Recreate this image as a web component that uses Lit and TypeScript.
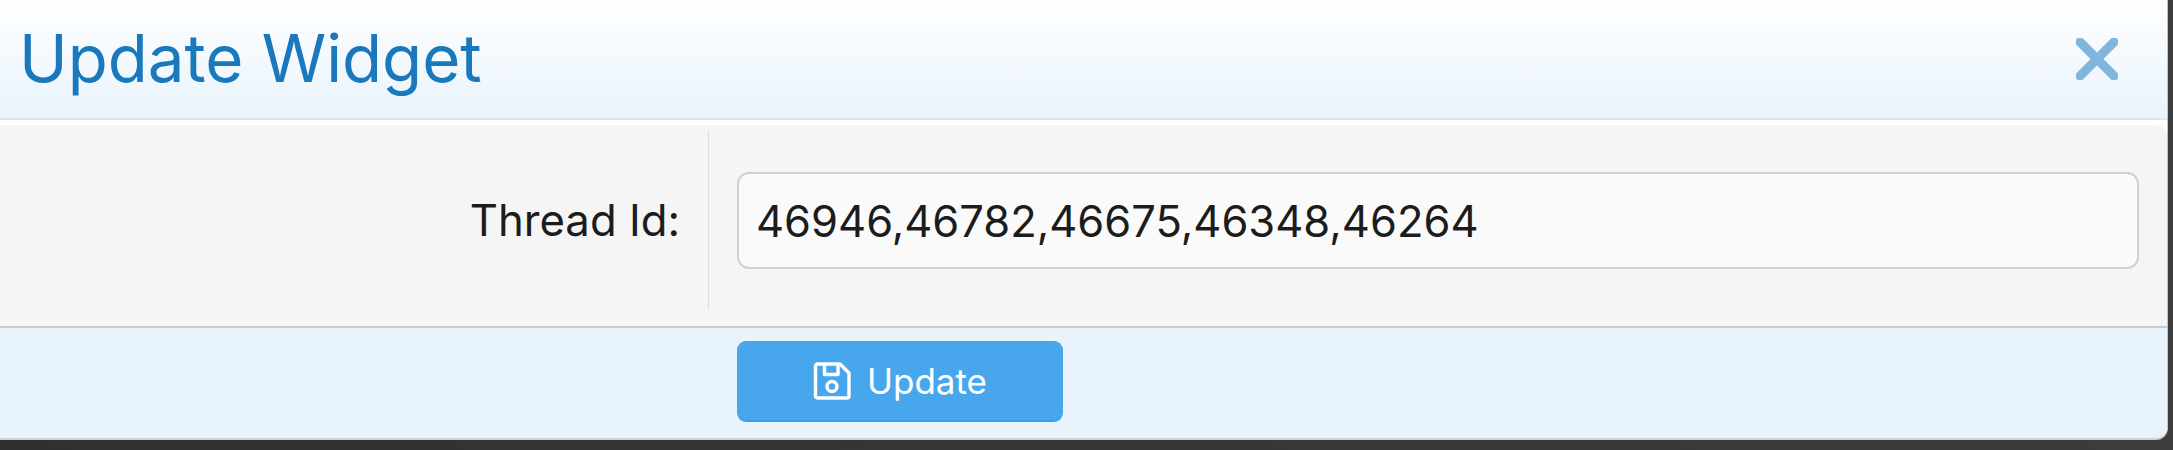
import { LitElement, css, html } from 'lit';
import { customElement, property } from 'lit/decorators.js';

@customElement("app-root")
export class AppRoot extends LitElement {

    @property({ type: String })
    public threadIds: string = "46946,46782,46675,46348,46264";

    static styles = css`

    :host {
        display: block;
        width: 2173px;
        height: 450px;
        overflow: hidden;
        background: linear-gradient( 90deg, #2f3030, #3c3c3c );
        font-family: Inter, "Liberation Sans", sans-serif;
    }

    .modal {
        width: 2168px;
        height: 440px;
        box-sizing: border-box;
        display: flex;
        flex-direction: column;
        background: #fff;
        border-right: 1px solid #c4c4c4;
        border-bottom: 2px solid #cfcfcf;
        border-bottom-right-radius: 12px;
        overflow: hidden;
    }

    .header {
        height: 120px;
        flex: none;
        box-sizing: border-box;
        display: flex;
        align-items: center;
        justify-content: space-between;
        padding: 0 49px 0 19px;
        background: linear-gradient( 180deg, #ffffff, #e8f3fc );
        border-bottom: 2px solid #e1e4e7;
    }

    .title {
        margin: 0;
        font-size: 65.4px;
        font-weight: 400;
        color: #1a78bc;
        line-height: 1;
    }

    .close {
        display: block;
        width: 42px;
        height: 42px;
    }

    .body {
        margin-top: 5px;
        height: 203px;
        flex: none;
        box-sizing: border-box;
        padding: 6px 28px 16px 0;
        display: grid;
        grid-template-columns: 709px 1fr;
        background: #f5f5f5;
        border-bottom: 2px solid #cccccc;
        border-top-right-radius: 10px;
    }

    .label {
        display: flex;
        align-items: center;
        justify-content: flex-end;
        padding-right: 28px;
        border-right: 1px solid #dedede;
        font-size: 43.7px;
        color: #1c1c1c;
    }

    .field {
        display: flex;
        align-items: center;
        padding-left: 28px;
    }

    .input {
        width: 100%;
        height: 97px;
        box-sizing: border-box;
        padding: 0 17px;
        background: #fafafa;
        border: 2px solid #d0d0d0;
        border-radius: 12px;
        font: inherit;
        font-size: 43.5px;
        color: #1c1c1c;
        outline: none;
    }

    .footer {
        flex: 1;
        padding: 13px 0 0 737px;
        background: #e8f3fc;
    }

    .button {
        width: 326px;
        height: 81px;
        box-sizing: border-box;
        display: flex;
        align-items: center;
        justify-content: center;
        gap: 16px;
        padding: 0;
        background: #48a7ec;
        border: 1px solid #48a7ec;
        border-bottom: 2px solid #3a9eea;
        border-radius: 9px;
        font: inherit;
        font-size: 35px;
        color: #fff;
    }

    .button svg {
        display: block;
        width: 38px;
        height: 38px;
    }

    `;

    render() {

        return html`
            <div class="modal">
                <div class="header">
                    <h1 class="title">Update Widget</h1>
                    <svg class="close" viewBox="0 0 42 42">
                        <path d="M4 4 L38 38 M38 4 L4 38" fill="none" stroke="#80b5dc" stroke-width="9" stroke-linecap="round"/>
                    </svg>
                </div>
                <div class="body">
                    <div class="label">Thread Id:</div>
                    <div class="field">
                        <input class="input" type="text" .value=${this.threadIds}>
                    </div>
                </div>
                <div class="footer">
                    <button class="button">
                        <svg viewBox="0 0 38 38" fill="none" stroke="#fff" stroke-width="3.4" stroke-linejoin="round">
                            <path d="M2.5 4 a2 2 0 0 1 2-2 H27 L36 11 V34 a2 2 0 0 1 -2 2 H4.5 a2 2 0 0 1 -2-2 Z"/>
                            <path d="M11.5 2 V12.5 H25 V2"/>
                            <circle cx="19" cy="24.5" r="5"/>
                        </svg>
                        Update
                    </button>
                </div>
            </div>
        `;

    }

}
